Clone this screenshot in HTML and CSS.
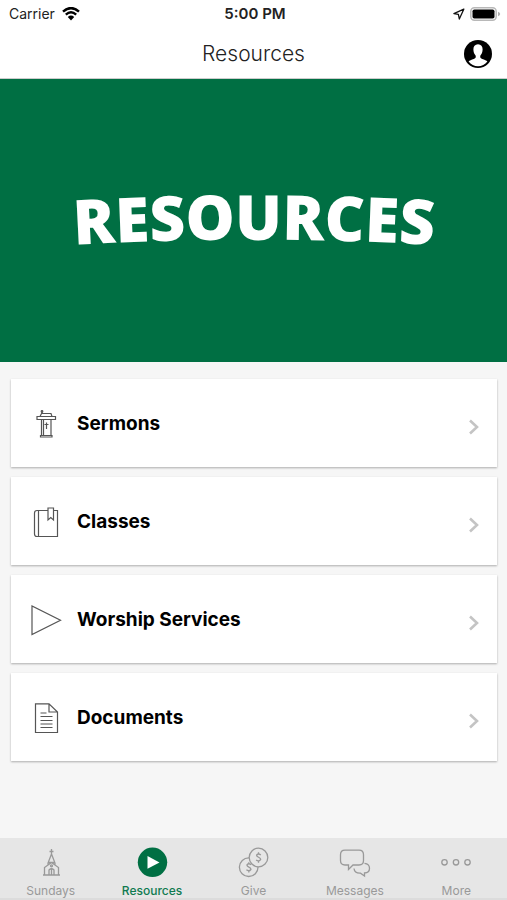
FILE: index.html
```html
<!DOCTYPE html>
<html lang="en">
<head>
<meta charset="utf-8">
<meta name="viewport" content="width=device-width, initial-scale=1">
<title>Resources</title>
<link rel="stylesheet" href="styles.css">
</head>
<body>
<div class="status">
  <div class="status-left">
    <span>Carrier</span>
    <svg class="wifi" viewBox="0 0 18 14" width="18" height="14" aria-hidden="true">
      <path d="M1 4.6Q9-2.4 17 4.6" fill="none" stroke="#000" stroke-width="2.5"/>
      <path d="M3.8 7.6Q9 3 14.2 7.6" fill="none" stroke="#000" stroke-width="2.4"/>
      <path d="M5.8 10Q9 7.2 12.2 10L9 13.4Z"/>
    </svg>
  </div>
  <div class="status-time">5:00 PM</div>
  <div class="status-right">
    <svg viewBox="0 0 12 12" width="12" height="12" aria-hidden="true">
      <path d="M10.8 1.2L.9 5.6L5.4 6.4L6.3 11Z" fill="none" stroke="#111" stroke-width="1.3" stroke-linejoin="round"/>
    </svg>
    <svg viewBox="0 0 31 14" width="31" height="14" aria-hidden="true">
      <rect x=".8" y=".8" width="25.4" height="12.4" rx="3.6" fill="#fff" stroke="#b8b8b8" stroke-width="1.5"/>
      <rect x="2.5" y="2.5" width="22" height="9" rx="1.8"/>
      <path d="M28 4.8Q30.2 5.6 30.2 7T28 9.2Z" fill="#b0b0b0"/>
    </svg>
  </div>
</div>
<header class="header">
  <h1 class="title">Resources</h1>
  <button class="profile" type="button" aria-label="Profile">
    <svg viewBox="0 0 28 28" width="28" height="28" aria-hidden="true">
      <circle cx="14" cy="14" r="14"/>
      <path d="M14 4.3C10.8 4.3 9.3 6.6 9.4 9.6C9.4 12.2 10.3 14.1 11.6 15.6C12.1 17.6 11.6 18.4 9.8 19.1C7.5 20 5.4 20.4 4.6 21.6A12 12 0 0 0 23.4 21.6C22.6 20.4 20.5 20 18.2 19.1C16.4 18.4 15.9 17.6 16.4 15.6C17.7 14.1 18.6 12.2 18.6 9.6C18.7 6.6 17.2 4.3 14 4.3Z" fill="#fff"/>
    </svg>
  </button>
</header>
<svg class="banner" viewBox="0 0 507 283" role="img" aria-label="Resources">
  <path id="arc" d="M54 167A3200 3200 0 0 1 454 167" fill="none"/>
  <text class="banner-text" text-anchor="middle"><textPath href="#arc" startOffset="50%">RESOURCES</textPath></text>
</svg>
<main class="list">
  <a class="card" href="#sermons">
    <svg class="card-icon" viewBox="0 0 32 32" width="32" height="32" aria-hidden="true">
      <path d="M10 7.500L11.500 4.500H21L22 7.500M7 7.500H25.500V10.500H7ZM11.500 10.500V26.500M21 10.500V26.500M13.500 10.500V26.500M10.500 28V26.500H22V28ZM16.500 13.500V20M14.500 15.500H18.500M12 5V2.500"/>
      <circle cx="12" cy="2.500" r=".8"/>
    </svg>
    <span class="card-label">Sermons</span>
    <svg class="chevron" viewBox="0 0 12 16" width="12" height="16" aria-hidden="true"><path d="M2 1.500L9 8L2 14.500"/></svg>
  </a>
  <a class="card" href="#classes">
    <svg class="card-icon" viewBox="0 0 32 32" width="32" height="32" aria-hidden="true">
      <path d="M18 3.500H7Q4.500 3.500 4.500 6V27Q4.500 29.500 7 29.500H27.500V3.500H23.500M8.500 3.500V29.500M18 1H23.500V13L20.750 10.500L18 13Z"/>
    </svg>
    <span class="card-label">Classes</span>
    <svg class="chevron" viewBox="0 0 12 16" width="12" height="16" aria-hidden="true"><path d="M2 1.500L9 8L2 14.500"/></svg>
  </a>
  <a class="card" href="#worship">
    <svg class="card-icon" viewBox="0 0 32 32" width="32" height="32" aria-hidden="true">
      <path d="M2 1V29.500L30.500 15.200Z"/>
    </svg>
    <span class="card-label">Worship Services</span>
    <svg class="chevron" viewBox="0 0 12 16" width="12" height="16" aria-hidden="true"><path d="M2 1.500L9 8L2 14.500"/></svg>
  </a>
  <a class="card" href="#documents">
    <svg class="card-icon" viewBox="0 0 32 32" width="32" height="32" aria-hidden="true">
      <path d="M5.500 .8H19L27.500 9V29.500H5.500ZM19 .8V9H27.500M10.500 10H16.500M10.500 13.500H22.500M10.500 17.500H22.500M10.500 21H22.500M10.500 24.500H22.500"/>
    </svg>
    <span class="card-label">Documents</span>
    <svg class="chevron" viewBox="0 0 12 16" width="12" height="16" aria-hidden="true"><path d="M2 1.500L9 8L2 14.500"/></svg>
  </a>
</main>
<nav class="tabs">
  <a class="tab" href="#sundays">
    <svg viewBox="0 0 32 32" width="32" height="32" aria-hidden="true">
      <path d="M16.500 2V8M14.500 4.500H18.500M16.500 7L13 16V18M16.500 7L20 16V18M13 15.500H20M16.500 15.500L9.500 20.500V28H23.500V20.500ZM8 28H25M14 28V23Q16.500 20.500 19 23V28M16.500 22V28"/>
      <circle cx="16.500" cy="18.800" r="1"/>
    </svg>
    <span>Sundays</span>
  </a>
  <a class="tab tab-active" href="#resources" aria-current="page">
    <svg viewBox="0 0 32 32" width="32" height="32" aria-hidden="true">
      <circle class="disc" cx="16.500" cy="15.300" r="14.700"/>
      <path class="play" d="M11.500 9V21.800L23.500 15.400Z"/>
    </svg>
    <span>Resources</span>
  </a>
  <a class="tab" href="#give">
    <svg viewBox="0 0 32 32" width="32" height="32" aria-hidden="true">
      <circle cx="21.500" cy="10.500" r="9.300"/>
      <path d="M12 10.900A9.300 9.300 0 1 0 21 20"/>
      <path d="M23.800 8Q21.500 6 19.800 7.800C18.600 10.500 24.300 10 23.600 12.700Q21.800 15 19.100 13M21.500 5.300V7M21.500 13.700V15.700M14.200 17.800Q11.800 15.800 10.100 17.600C8.900 20.300 14.600 19.800 13.900 22.500Q12.100 24.800 9.400 22.800M11.800 15.300V17M11.800 23.600V25.500"/>
    </svg>
    <span>Give</span>
  </a>
  <a class="tab" href="#messages">
    <svg viewBox="0 0 32 32" width="32" height="32" aria-hidden="true">
      <path d="M6 3.200H20Q24.500 3.200 24.500 7.700V13.500Q24.500 18 20 18H14L9.500 22.500V18H6Q1.500 18 1.500 13.500V7.700Q1.500 3.200 6 3.200ZM25.500 16.300Q30.500 16.800 30.500 21.300Q30.500 26 25.500 26V29L21.500 26.200Q15.500 26.500 15 21.500"/>
    </svg>
    <span>Messages</span>
  </a>
  <a class="tab" href="#more">
    <svg viewBox="0 0 32 32" width="32" height="32" aria-hidden="true">
      <circle cx="4.500" cy="15.300" r="2.700"/><circle cx="16" cy="15.300" r="2.700"/><circle cx="27.500" cy="15.300" r="2.700"/>
    </svg>
    <span>More</span>
  </a>
</nav>
</body>
</html>
```

FILE: styles.css
```css
* {
  box-sizing: border-box;
}

body {
  margin: 0;
  min-height: 100vh;
  display: flex;
  flex-direction: column;
  background: #f6f6f6;
  color: #000;
  font-family: Inter, "Liberation Sans", sans-serif;
}

a {
  color: inherit;
  text-decoration: none;
}

svg {
  display: block;
  flex: none;
}

.status {
  display: grid;
  grid-template-columns: 1fr auto 1fr;
  align-items: center;
  height: 28px;
  padding: 0 6px 0 9px;
  background: #fff;
  font-size: 14px;
  line-height: 20px;
  color: #222;
}

.status-left,
.status-right {
  display: flex;
  align-items: center;
  gap: 7px;
}

.status-right {
  justify-content: flex-end;
  gap: 5px;
}

.status-time {
  font-size: 15px;
  font-weight: 600;
}

.header {
  display: grid;
  grid-template-columns: 1fr auto 1fr;
  align-items: center;
  height: 51px;
  padding: 2px 15px 0;
  background: #fff;
  border-bottom: 1px solid #ccc;
}

.title {
  grid-column: 2;
  margin: 0;
  font-size: 21px;
  font-weight: 300;
  line-height: 28px;
  color: #222;
}

.profile {
  justify-self: end;
  padding: 0;
  border: 0;
  background: none;
}

.banner {
  width: 100%;
  height: auto;
  background: #006f43;
}

.banner-text {
  font-family: "Open Sans", "Noto Sans", sans-serif;
  font-size: 62px;
  font-weight: 800;
  fill: #fff;
}

.list {
  flex: 1;
  display: flex;
  flex-direction: column;
  gap: 10px;
  padding: 17px 10px 17px 11px;
}

.card {
  display: flex;
  align-items: center;
  min-height: 88px;
  padding: 0 17px 0 19px;
  background: #fff;
  box-shadow: 0 1px 2px rgba(0, 0, 0, 0.3);
}

.card-icon {
  margin-top: 4px;
  fill: none;
  stroke: #555;
  stroke-width: 1.2;
}

.card-label {
  flex: 1;
  margin: 2px 0 0 15px;
  font-size: 19px;
  font-weight: 700;
  line-height: 26px;
}

.chevron {
  margin-top: 8px;
  fill: none;
  stroke: #c4c4c4;
  stroke-width: 2.6;
}

.tabs {
  display: grid;
  grid-template-columns: repeat(5, 1fr);
  height: 62px;
  padding-top: 9px;
  background: #e6e6e6;
  border-bottom: 2px solid #dcdcdc;
}

.tab {
  display: flex;
  flex-direction: column;
  align-items: center;
  gap: 4px;
  font-size: 12px;
  line-height: 16px;
  color: #999;
}

.tab svg {
  fill: none;
  stroke: #999;
  stroke-width: 1.3;
}

.tab-active {
  color: #0f7a50;
  font-weight: 500;
}

.tab .disc {
  fill: #006f43;
  stroke: none;
}

.tab .play {
  fill: #fff;
  stroke: none;
}
```
